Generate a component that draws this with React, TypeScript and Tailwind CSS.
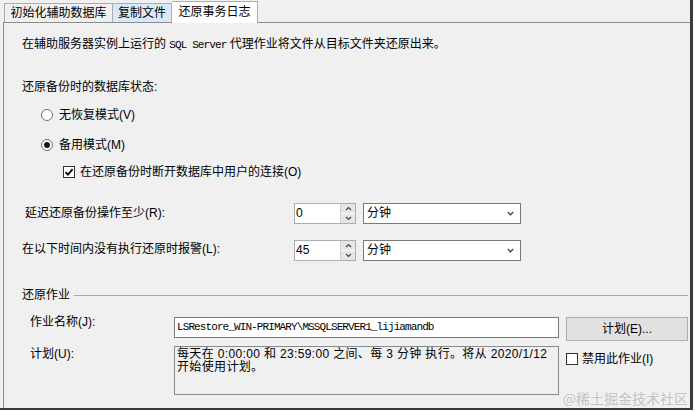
import React from 'react';

const mono = "font-['Liberation_Mono',monospace] text-[11px] tracking-[-0.9px]";

function Radio({ checked }: { checked?: boolean }) {
  return (
    <span className="w-[12px] h-[12px] rounded-full border border-[#6f6f6f] bg-white flex items-center justify-center shrink-0">
      {checked && <span className="w-[6px] h-[6px] rounded-full bg-[#1a1a1a]" />}
    </span>
  );
}

function Check({ checked }: { checked?: boolean }) {
  return (
    <span className="w-[12px] h-[12px] border border-[#333] bg-white flex items-center justify-center shrink-0">
      {checked && (
        <svg width="10" height="10" viewBox="0 0 10 10">
          <path d="M1.5 5.2 L4 7.6 L8.6 2.2" fill="none" stroke="#111" strokeWidth="2" />
        </svg>
      )}
    </span>
  );
}

function Spinner({ value }: { value: string }) {
  return (
    <div className="flex h-[21px] border border-[#abadb3] bg-white">
      <div className="w-[45px] pl-[1px] leading-[19px] text-[12px]">{value}</div>
      <div className="w-[15px] flex flex-col border-l border-[#d0d0d0]">
        <div className="flex-1 bg-[#e6e6e6] border-b border-white flex items-center justify-center">
          <svg width="7" height="5" viewBox="0 0 7 5"><path d="M1 4 L3.5 1.5 L6 4" fill="none" stroke="#444" strokeWidth="1.2" /></svg>
        </div>
        <div className="flex-1 bg-[#e6e6e6] flex items-center justify-center">
          <svg width="7" height="5" viewBox="0 0 7 5"><path d="M1 1 L3.5 3.5 L6 1" fill="none" stroke="#444" strokeWidth="1.2" /></svg>
        </div>
      </div>
    </div>
  );
}

function Select({ value }: { value: string }) {
  return (
    <div className="ml-[7px] w-[158px] h-[21px] border border-[#7a7a7a] bg-white flex items-center pl-[3px] pr-[6px]">
      <span className="flex-1 text-[12px] leading-[19px]">{value}</span>
      <svg width="7" height="5" viewBox="0 0 7 5"><path d="M0.8 1 L3.5 3.8 L6.2 1" fill="none" stroke="#555" strokeWidth="1.5" /></svg>
    </div>
  );
}

export default function App() {
  return (
    <div className="w-[695px] h-[412px] bg-white overflow-hidden font-['Liberation_Sans','Noto_Sans_CJK_SC',sans-serif] text-[12px] text-black">
      <div className="relative w-[693px] h-[410px] bg-[#f0f0f0] border-r-[3px] border-b-[2px] border-[#3a3a3a]">
        {/* Tabs */}
        <div className="h-[22px] flex items-end pl-[4px]">
          <div className="h-[19px] w-[109px] border border-b-0 border-[#acacac] bg-[#f0f0f0] flex items-center justify-center leading-[17px]">初始化辅助数据库</div>
          <div className="h-[19px] w-[59px] border border-b-0 border-l-0 border-[#8fb3d9] bg-[#d8eaf9] flex items-center justify-center leading-[17px]">复制文件</div>
          <div className="relative z-10 mb-[-1px] h-[22px] w-[86px] border border-b-0 border-l-0 border-[#acacac] bg-white flex items-center justify-center leading-[18px] pb-[2px]">还原事务日志</div>
        </div>

        {/* Panel */}
        <div className="ml-[3px] h-[386px] border-l border-t border-[#8c8c8c] flex flex-col">
          <div className="mt-[11px] h-[20px] pl-[18px] flex items-center leading-[20px]">
            <span>在辅助服务器实例上运行的 <span className={mono}>SQL Server</span> 代理作业将文件从目标文件夹还原出来。</span>
          </div>

          <div className="mt-[23px] h-[20px] pl-[18px] flex items-center">还原备份时的数据库状态:</div>

          <div className="mt-[8px] h-[20px] pl-[37px] flex items-center">
            <Radio />
            <span className="ml-[6px]">无恢复模式(V)</span>
          </div>

          <div className="mt-[10px] h-[20px] pl-[37px] flex items-center">
            <Radio checked />
            <span className="ml-[6px]">备用模式(M)</span>
          </div>

          <div className="mt-[7px] h-[20px] pl-[59px] flex items-center">
            <Check checked />
            <span className="ml-[5px]">在还原备份时断开数据库中用户的连接(O)</span>
          </div>

          <div className="mt-[21px] h-[21px] pl-[21px] flex items-center">
            <span className="w-[269px] -mt-[2px]">延迟还原备份操作至少(R):</span>
            <Spinner value="0" />
            <Select value="分钟" />
          </div>

          <div className="mt-[16px] h-[21px] pl-[18px] flex items-center">
            <span className="w-[272px] -mt-[3px]">在以下时间内没有执行还原时报警(L):</span>
            <Spinner value="45" />
            <Select value="分钟" />
          </div>

          <div className="mt-[24px] h-[20px] pl-[18px] pr-[2px] flex items-center">
            <span>还原作业</span>
            <div className="ml-[4px] flex-1 border-t border-[#a8a8a8]" />
          </div>

          <div className="mt-[12px] h-[24px] pl-[26px] flex items-start">
            <span className="w-[144px] -mt-[3px] leading-[16px]">作业名称(J):</span>
            <div className={`w-[385px] h-[21px] border border-[#7a7a7a] bg-white pl-[2px] leading-[19px] ${mono}`}>LSRestore_WIN-PRIMARY\MSSQLSERVER1_lijiamandb</div>
            <div className="ml-[7px] w-[122px] h-[24px] border border-[#adadad] bg-[#e1e1e1] flex items-center justify-center">计划(E)...</div>
          </div>

          <div className="mt-[5px] h-[49px] pl-[26px] flex items-start">
            <span className="w-[144px] mt-[0px] leading-[16px]">计划(U):</span>
            <div className="w-[385px] h-[49px] border border-[#8a8a8a] bg-[#f0f0f0] pl-[2px] pt-[1px] leading-[13px] tracking-[0.35px]">
              每天在 0:00:00 和 23:59:00 之间、每 3 分钟 执行。将从 2020/1/12<br />开始使用计划。
            </div>
            <div className="ml-[7px] mt-[6px] flex items-center">
              <Check />
              <span className="ml-[4px] leading-[14px]">禁用此作业(I)</span>
            </div>
          </div>
        </div>

        {/* Watermark */}
        <div className="absolute right-[2px] bottom-[1px] text-[14px] leading-[17px] text-[#c4c4c4] font-['Noto_Sans_CJK_SC',sans-serif]">@稀土掘金技术社区</div>
      </div>
    </div>
  );
}
